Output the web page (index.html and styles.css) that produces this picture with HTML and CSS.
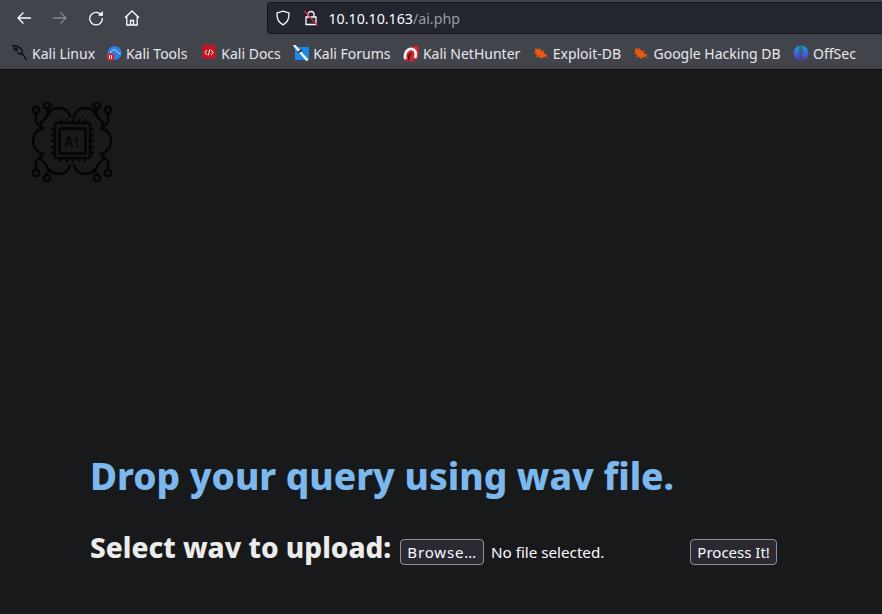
FILE: index.html
```html
<!DOCTYPE html>
<html lang="en">
<head>
<meta charset="utf-8">
<title>ai.php</title>
<link rel="stylesheet" href="styles.css">
</head>
<body>
<header class="chrome">
  <div class="toolbar">
    <nav class="nav">
      <svg class="nav-icon" viewBox="0 0 16 16"><path d="M15 8H2M7.5 2.5 2 8l5.500 5.500"/></svg>
      <svg class="nav-icon off" viewBox="0 0 16 16"><path d="M1 8h13M8.500 2.500 14 8l-5.500 5.500"/></svg>
      <svg class="nav-icon" viewBox="0 0 16 16"><path d="M13.500 5.500A6.300 6.300 0 1 0 14.300 8"/><path class="fill" d="M10 5.500 14.800 1v5z"/></svg>
      <svg class="nav-icon" viewBox="0 0 16 16"><path d="M1 7.800 8 1l7 6.800M2.800 6.500V15h10.400V6.500M6.500 15v-4.500h3V15"/></svg>
    </nav>
    <div class="urlbar">
      <svg class="url-icon" viewBox="0 0 16 16"><path d="M8 1.200 14 3c.3 5.500-1.500 9.500-6 11.800C3.500 12.500 1.700 8.500 2 3z"/></svg>
      <svg class="url-icon lock" viewBox="0 0 16 16"><path d="M5 7V4.500a3 3 0 0 1 6 0V7M3 7h10v7.500H3z"/><path class="slash" d="M1.500 1 14.500 15.500"/></svg>
      <span class="url"><span class="host">10.10.10.163</span>/ai.php</span>
    </div>
  </div>
  <div class="bookmarks">
    <a class="bm"><svg class="fav" viewBox="0 0 16 16"><path class="kali" d="M0 .8c3.500-.3 6 .3 8 2 1.800 1.500 3 3.500 2 5-.8 1.200-3 1-4.500.3 3 .2 6 1.500 7 3.500.7 1.400 1 2.500 2 3.600M1 3.200c2-.4 3.500 0 5 1.300M2 5c1.500-.2 2.600.2 3.500 1"/></svg>Kali Linux</a>
    <a class="bm tools"><svg class="fav" viewBox="0 0 16 16"><circle cx="8.500" cy="8" r="7" fill="#2f7fe0"/><path d="M4 8c2-3 4-4 5.500-3s2 3 5 4" fill="none" stroke="#cfe3f7"/><circle cx="4.500" cy="12" r="3.800" fill="#d8232a"/><path d="M3.500 10.300v3.400M5.500 10.300v3.400" stroke="#fff"/></svg>Kali Tools</a>
    <a class="bm"><svg class="fav" viewBox="0 0 16 16"><path d="M1.500 0h13v14h-13z" fill="#c4161c"/><path d="M1.500 14h12v2h-12z" fill="#33415c"/><path d="M6 5 4 7.500 6 10M10 5l2 2.500L10 10" fill="none" stroke="#fff"/><path d="M8.800 4.500 7.200 10.500" stroke="#fff"/></svg>Kali Docs</a>
    <a class="bm"><svg class="fav" viewBox="0 0 16 16"><path d="M2 2h14v13H2z" fill="#1e88e5"/><path d="M1 0 14.500 15.500" stroke="#f4f4f4" stroke-width="2.500"/><path d="M5 7.500 9 5" stroke="#23252b" stroke-width="1.500"/></svg>Kali Forums</a>
    <a class="bm"><svg class="fav" viewBox="0 0 16 16"><path d="M1 6 11 1h4.500v11L11 16H1z" fill="#d8232a"/><path d="M2.500 14C.5 8 5 3 9 4s4.500 5 3 9" fill="none" stroke="#f2f2f2" stroke-width="2.800"/><path d="M6 15C5 11 7 8 8.500 9" fill="none" stroke="#16161a" stroke-width="1.500"/></svg>Kali NetHunter</a>
    <a class="bm"><svg class="fav" viewBox="0 0 16 16"><path class="bug" d="M2 3.500c3 0 7 2 9 4.500l3.500 2.500-3.500 1.500c-3 2-5 .5-7-1.500C2.500 9 2 6 2 3.500z"/><path class="legs" d="M1 8h3M3 12l3-2M8 14l1-3M6 3l2 3M11 5 10 8M15 13l-4-2"/></svg>Exploit-DB</a>
    <a class="bm"><svg class="fav" viewBox="0 0 16 16"><path class="bug" d="M2 3.500c3 0 7 2 9 4.500l3.500 2.500-3.500 1.500c-3 2-5 .5-7-1.500C2.500 9 2 6 2 3.500z"/><path class="legs" d="M1 8h3M3 12l3-2M8 14l1-3M6 3l2 3M11 5 10 8M15 13l-4-2"/></svg>Google Hacking DB</a>
    <a class="bm"><svg class="fav" viewBox="0 0 16 16"><defs><linearGradient id="og" x1="0" y1="0" x2="0" y2="1"><stop offset="0" stop-color="#16a3d8"/><stop offset="1" stop-color="#5b35c9"/></linearGradient></defs><circle cx="8" cy="8" r="7.500" fill="url(#og)"/><path d="M7 .5v15M9 .5v15" stroke="#42444b"/></svg>OffSec</a>
  </div>
</header>
<main class="page">
  <svg class="logo" viewBox="0 0 80 80">
    <g class="logo-lines">
      <rect x="23" y="21" width="35" height="35" rx="1.500"/>
      <rect x="27.500" y="26.500" width="26" height="25" rx="1.500"/>
      <path class="ai" d="M33 45 36.500 35h.6l3.400 10M34 41.800h5.500M44.500 35v10"/>
      <path d="M29 21v-4M35 21v-4M41 21v-4M47 21v-4M53 21v-4M29 56v4M35 56v4M41 56v4M47 56v4M53 56v4M23 27h-4M23 33h-4M23 39h-4M23 45h-4M23 51h-4M58 27h4M58 33h4M58 39h4M58 45h4M58 51h4"/>
      <path d="M38 16C38 10 33 6 27 6 20 6 15 10 14 16 10 18 8 22 9 27 4 29 1 33 1 39 1 45 4 49 9 51 8 56 10 60 14 62 15 68 20 72 27 72 33 72 38 68 38 62"/>
      <path d="M42 16C42 10 47 6 53 6 60 6 65 10 66 16 70 18 72 22 71 27 76 29 79 33 79 39 79 45 76 49 71 51 72 56 70 60 66 62 65 68 60 72 53 72 47 72 42 68 42 62"/>
      <circle cx="4" cy="8" r="3.200"/><circle cx="15" cy="3.500" r="3.200"/><circle cx="76" cy="8" r="3.200"/><circle cx="65" cy="3.500" r="3.200"/>
      <circle cx="4" cy="71" r="3.200"/><circle cx="15" cy="76" r="3.200"/><circle cx="76" cy="71" r="3.200"/><circle cx="65" cy="76" r="3.200"/>
      <path d="M4 11v9l8 8M15 7l3 6M76 11v9l-8 8M65 7l-3 6M4 68v-9l8-8M15 72l3-6M76 68v-9l-8-8M65 72l-3-6"/>
    </g>
  </svg>
  <section class="upload">
    <h1 class="title">Drop your query using wav file.</h1>
    <form class="form">
      <span class="label">Select wav to upload:</span>
      <span class="file"><span class="btn browse">Browse…</span><span class="nofile">No file selected.</span></span>
      <span class="btn">Process It!</span>
    </form>
  </section>
</main>
</body>
</html>
```
FILE: styles.css
```css
* { box-sizing: border-box; }
html, body { margin: 0; height: 100%; overflow: hidden; }
body { background: #18191b; font-family: "Noto Sans", sans-serif; color: #fbfbfe; width: 882px; height: 614px; display: flex; flex-direction: column; }
.chrome { flex: none; background: #42444b; border-bottom: 1px solid #0e0e11; height: 70px; }
.toolbar { display: flex; height: 37px; padding: 2px 0 3px 16px; align-items: center; }
.nav { display: flex; gap: 20px; width: 251px; align-items: center; }
.nav-icon { width: 16px; height: 16px; fill: none; stroke: #fbfbfe; stroke-width: 1.300; }
.nav-icon.off { stroke: #85868b; }
.nav-icon .fill { fill: #fbfbfe; stroke: none; }
.urlbar { flex: 1; height: 32px; background: #23252f; border: 1px solid #14151a; border-right: 0; border-radius: 4px 0 0 4px; display: flex; align-items: center; padding-left: 7px; }
.url-icon { width: 16px; height: 16px; fill: none; stroke: #fbfbfe; stroke-width: 1.300; margin-right: 12px; }
.url-icon.lock { margin-right: 9.500px; }
.slash { stroke: #e22850; }
.url { font-size: 14.200px; color: #9a9ba3; }
.host { color: #fbfbfe; }
.bookmarks { display: flex; height: 32px; padding-left: 12px; gap: 12.400px; align-items: center; }
.bm { display: flex; align-items: center; gap: 4px; font-size: 14px; color: #e8e8ec; white-space: nowrap; }
.tools { margin-left: -1.500px; margin-right: 1.500px; }
.fav { width: 16px; height: 16px; flex: none; }
.kali { fill: none; stroke: #0b0b0d; stroke-width: 1.300; }
.bug { fill: #e8590c; }
.legs { fill: none; stroke: #e8590c; stroke-width: .9; }
.page { flex: 1; padding: 32px 0 0 32px; }
.logo { display: block; width: 80px; height: 80px; }
.logo-lines { fill: none; stroke: #050506; stroke-width: 2.500; }
.logo-lines .ai { stroke-width: 1.500; }
.upload { margin: 269px 0 0 58px; }
.title { margin: 0; font-size: 37px; font-weight: 800; line-height: 50px; color: #7cb8ee; }
.form { display: flex; align-items: baseline; margin-top: 26px; }
.label { font-size: 28px; font-weight: 800; color: #ececec; line-height: 40px; margin-right: 9px; }
.file { display: flex; align-items: baseline; width: 290px; }
.btn { font-size: 15px; line-height: 20px; padding: 2px 6px; background: #2b2a33; border: 1px solid #8f8f9d; border-radius: 4px; color: #fbfbfe; white-space: nowrap; }
.browse { letter-spacing: .85px; }
.nofile { font-size: 15.200px; margin-left: 7px; color: #fbfbfe; white-space: nowrap; }
```
